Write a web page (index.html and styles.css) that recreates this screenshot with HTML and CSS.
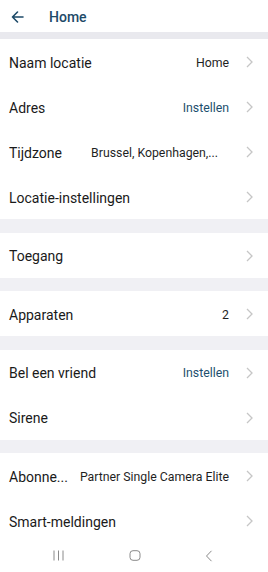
FILE: index.html
```html
<!DOCTYPE html>
<html>
<head>
<meta charset="utf-8">
<link rel="stylesheet" href="styles.css">
</head>
<body>
<div class="screen">
  <header class="topbar">
    <svg class="back" width="13" height="12" viewBox="0 0 13 12"><path d="M12 6H1.5M6.5 1L1.5 6l5 5" fill="none" stroke="#1d4a68" stroke-width="1.6" stroke-linecap="round" stroke-linejoin="round"/></svg>
    <span class="title">Home</span>
  </header>
  <div class="gap gap-top"></div>
  <section class="group">
    <div class="row"><span class="label">Naam locatie</span><span class="value">Home</span><svg class="chev" width="7" height="12" viewBox="0 0 7 12"><path d="M1 1l5 5-5 5" fill="none" stroke="#c6c6c6" stroke-width="1.3"/></svg></div>
    <div class="row"><span class="label">Adres</span><span class="value link">Instellen</span><svg class="chev" width="7" height="12" viewBox="0 0 7 12"><path d="M1 1l5 5-5 5" fill="none" stroke="#c6c6c6" stroke-width="1.3"/></svg></div>
    <div class="row"><span class="label">Tijdzone</span><span class="value trunc">Brussel, Kopenhagen,...</span><svg class="chev" width="7" height="12" viewBox="0 0 7 12"><path d="M1 1l5 5-5 5" fill="none" stroke="#c6c6c6" stroke-width="1.3"/></svg></div>
    <div class="row"><span class="label">Locatie-instellingen</span><span class="value"></span><svg class="chev" width="7" height="12" viewBox="0 0 7 12"><path d="M1 1l5 5-5 5" fill="none" stroke="#c6c6c6" stroke-width="1.3"/></svg></div>
  </section>
  <div class="gap"></div>
  <section class="group">
    <div class="row"><span class="label">Toegang</span><span class="value"></span><svg class="chev" width="7" height="12" viewBox="0 0 7 12"><path d="M1 1l5 5-5 5" fill="none" stroke="#c6c6c6" stroke-width="1.3"/></svg></div>
  </section>
  <div class="gap"></div>
  <section class="group">
    <div class="row"><span class="label">Apparaten</span><span class="value">2</span><svg class="chev" width="7" height="12" viewBox="0 0 7 12"><path d="M1 1l5 5-5 5" fill="none" stroke="#c6c6c6" stroke-width="1.3"/></svg></div>
  </section>
  <div class="gap"></div>
  <section class="group">
    <div class="row"><span class="label">Bel een vriend</span><span class="value link">Instellen</span><svg class="chev" width="7" height="12" viewBox="0 0 7 12"><path d="M1 1l5 5-5 5" fill="none" stroke="#c6c6c6" stroke-width="1.3"/></svg></div>
    <div class="row"><span class="label">Sirene</span><span class="value"></span><svg class="chev" width="7" height="12" viewBox="0 0 7 12"><path d="M1 1l5 5-5 5" fill="none" stroke="#c6c6c6" stroke-width="1.3"/></svg></div>
  </section>
  <div class="gap"></div>
  <section class="group">
    <div class="row"><span class="label">Abonne...</span><span class="value">Partner Single Camera Elite</span><svg class="chev" width="7" height="12" viewBox="0 0 7 12"><path d="M1 1l5 5-5 5" fill="none" stroke="#c6c6c6" stroke-width="1.3"/></svg></div>
    <div class="row"><span class="label">Smart-meldingen</span><span class="value"></span><svg class="chev" width="7" height="12" viewBox="0 0 7 12"><path d="M1 1l5 5-5 5" fill="none" stroke="#c6c6c6" stroke-width="1.3"/></svg></div>
  </section>
  <nav class="navbar">
    <svg width="11" height="11" viewBox="0 0 11 11"><path d="M1 0.5v10M5.5 0.5v10M10 0.5v10" stroke="#8a8a8a" stroke-width="1"/></svg>
    <svg width="12" height="11" viewBox="0 0 12 11"><rect x="1" y="0.7" width="10" height="9.6" rx="3" fill="none" stroke="#8a8a8a" stroke-width="1"/></svg>
    <svg width="8" height="12" viewBox="0 0 8 12"><path d="M6.5 0.8L1.5 6l5 5.2" fill="none" stroke="#8a8a8a" stroke-width="1"/></svg>
  </nav>
</div>
</body>
</html>
```

FILE: styles.css
```css
* { box-sizing: border-box; }
html, body { margin: 0; padding: 0; }
body {
  font-family: Roboto, "Noto Sans", sans-serif;
  background: #f0f0f4;
  width: 268px;
  height: 572px;
  overflow: hidden;
}
.screen {
  display: flex;
  flex-direction: column;
  height: 572px;
}
.topbar {
  height: 32px;
  background: #fff;
  display: flex;
  align-items: center;
  padding-left: 11px;
  flex-shrink: 0;
}
.back { display: block; margin-top: 1px; }
.title {
  margin-left: 25px;
  font-size: 14px;
  font-weight: 500;
  color: #1d4a68;
  margin-top: 1px;
}
.gap {
  height: 13.5px;
  background: #f0f0f4;
  flex-shrink: 0;
}
.gap-top {
  height: 7px;
  background: #e9e9ee;
}
.group { background: #fff; }
.row {
  height: 45px;
  display: flex;
  align-items: center;
  padding: 0 15px 0 9px;
}
.label {
  font-size: 14px;
  color: #1a1a1a;
  white-space: nowrap;
  flex-shrink: 0;
  margin-top: 2px;
}
.value {
  margin-left: auto;
  font-size: 12.3px;
  color: #1f1f1f;
  white-space: nowrap;
  padding-right: 17px;
  margin-top: 2px;
}
.value.trunc { padding-right: 28px; }
.value.link { color: #1d4f6d; }
.chev {
  display: block;
  flex-shrink: 0;
  margin-top: 1px;
}
.navbar {
  flex: 1;
  background: #fff;
  display: flex;
  align-items: center;
  justify-content: space-between;
  padding: 0 55px 4px 53px;
}
.navbar svg { display: block; }
```
